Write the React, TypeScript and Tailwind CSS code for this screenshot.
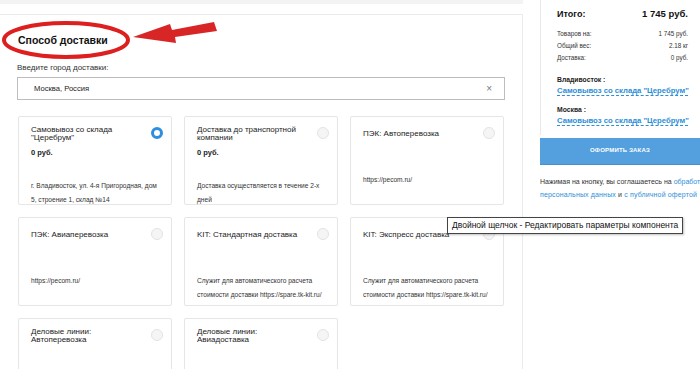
import React from 'react';

type Option = {
  title: string;
  price?: string;
  desc: string;
  selected?: boolean;
};

const options: Option[] = [
  { title: 'Самовывоз со склада "Церебрум"', price: '0 руб.', desc: 'г. Владивосток, ул. 4-я Пригородная, дом 5, строение 1, склад №14', selected: true },
  { title: 'Доставка до транспортной компании', price: '0 руб.', desc: 'Доставка осуществляется в течение 2-х дней' },
  { title: 'ПЭК: Автоперевозка', desc: 'https://pecom.ru/' },
  { title: 'ПЭК: Авиаперевозка', desc: 'https://pecom.ru/' },
  { title: 'KIT: Стандартная доставка', desc: 'Служит для автоматического расчета стоимости доставки https://spare.tk-kit.ru/' },
  { title: 'KIT: Экспресс доставка', desc: 'Служит для автоматического расчета стоимости доставки https://spare.tk-kit.ru/' },
  { title: 'Деловые линии: Автоперевозка', desc: '' },
  { title: 'Деловые линии: Авиадоставка', desc: '' },
];

function Radio({ checked }: { checked?: boolean }) {
  return checked ? (
    <div className="w-[12px] h-[12px] rounded-full border-[3px] border-[#2f8fde] bg-white shrink-0" />
  ) : (
    <div className="w-[12px] h-[12px] rounded-full border border-[#e3e3e3] bg-[#f5f5f5] shrink-0" />
  );
}

function OptionCard({ opt }: { opt: Option }) {
  return (
    <div className="h-[89px] border border-[#e6e6e6] rounded-[2px] bg-white pl-[12px] pr-[8px] pt-[5px] flex flex-col">
      <div className="flex items-start justify-between gap-[6px]">
        <div className="flex-1 min-w-0">
          <div className="h-[24px] flex items-center text-[8px] leading-[8px] text-[#222]">
            {opt.title}
          </div>
          {opt.price && (
            <div className="mt-[2px] text-[7.5px] leading-[10px] font-bold text-[#222]">{opt.price}</div>
          )}
        </div>
        <div className="mt-[5px]">
          <Radio checked={opt.selected} />
        </div>
      </div>
      {opt.desc && (
        <div className={`${opt.price ? 'mt-[21px]' : 'mt-[27px]'} text-[6.6px] leading-[14px] text-[#333]`}>
          {opt.desc}
        </div>
      )}
    </div>
  );
}

function Annotation() {
  return (
    <svg className="absolute left-0 top-0 pointer-events-none" width="230" height="70" viewBox="0 0 230 70">
      <ellipse cx="66" cy="40" rx="62" ry="17" fill="none" stroke="#dd1f1f" strokeWidth="4" />
      <polygon points="214,22 217,31 175,37 176,43 133,37 170,24 172,30" fill="#d82626" />
    </svg>
  );
}

export default function App() {
  return (
    <div className="relative w-[700px] h-[369px] overflow-hidden bg-white text-[#222] font-['Liberation_Sans',Arial,sans-serif]">
      <div className="flex gap-[17px]">
        <div className="w-[523px] shrink-0">
          <div className="h-[4px] bg-[#f3f3f3]" />
          <div className="mt-[10px] h-[355px] border-t border-r border-[#ebebeb] pl-[17px] pr-[17px]">
            <h2 className="mt-[18px] pl-[1px] text-[10.5px] leading-[14px] font-bold text-[#111]">Способ доставки</h2>
            <div className="mt-[16px] text-[8px] leading-[10px] text-[#333]">Введите город доставки:</div>
            <div className="mt-[4px] w-[488px] h-[23px] border border-[#bdbdbd] flex items-center pl-[16px] pr-[12px]">
              <span className="flex-1 text-[7.6px] text-[#222]">Москва, Россия</span>
              <span className="text-[10px] text-[#777] leading-none">×</span>
            </div>
            <div className="mt-[16px] ml-[1px] w-[486px] grid grid-cols-3 gap-x-[12px] gap-y-[12px]">
              {options.map((o) => (
                <OptionCard key={o.title} opt={o} />
              ))}
            </div>
          </div>
        </div>

        <div className="w-[160px] shrink-0">
          <div className="border-l border-[#e8e8e8] pl-[16px] pr-[12px] pt-[7px] pb-[9px]">
            <div className="flex justify-between items-center text-[9.5px] leading-[14px] font-bold text-[#111]">
              <span className="text-[9px]">Итого:</span>
              <span>1 745 руб.</span>
            </div>
            <div className="mt-[7px] text-[6.3px] leading-[12px] text-[#333]">
              <div className="flex justify-between"><span>Товаров на:</span><span>1 745 руб.</span></div>
              <div className="flex justify-between"><span>Общий вес:</span><span>2.18 кг</span></div>
              <div className="flex justify-between"><span>Доставка:</span><span>0 руб.</span></div>
            </div>
            <div className="mt-[10px] text-[6.8px] leading-[11px] font-bold text-[#222]">Владивосток :</div>
            <div className="text-[7.7px] leading-[11px] font-bold text-[#2d8ed8] underline decoration-dashed underline-offset-2 whitespace-nowrap">Самовывоз со склада "Церебрум"</div>
            <div className="mt-[8px] text-[6.8px] leading-[11px] font-bold text-[#222]">Москва :</div>
            <div className="text-[7.7px] leading-[11px] font-bold text-[#2d8ed8] underline decoration-dashed underline-offset-2 whitespace-nowrap">Самовывоз со склада "Церебрум"</div>
          </div>
          <button className="w-[160px] h-[27px] bg-[#54a0de] text-white text-[6px] font-bold tracking-[0.2px] border-b border-[#4a90c8]">
            ОФОРМИТЬ ЗАКАЗ
          </button>
          <div className="mt-[10px] text-[7px] leading-[13px] text-[#333] whitespace-nowrap overflow-hidden">
            <div>Нажимая на кнопку, вы соглашаетесь на <span className="text-[#2d8ed8]">обработку</span></div>
            <div className="tracking-[0.15px]"><span className="text-[#2d8ed8]">персональных данных</span> и <span className="text-[#2d8ed8]">с публичной офертой</span></div>
          </div>
        </div>
      </div>

      <Annotation />

      <div className="absolute left-[447px] top-[217px] h-[17px] px-[4px] border border-[#444] bg-white shadow-[1px_1px_2px_rgba(0,0,0,0.25)] flex items-center text-[8.5px] text-[#111] whitespace-nowrap">
        Двойной щелчок - Редактировать параметры компонента
      </div>
    </div>
  );
}
